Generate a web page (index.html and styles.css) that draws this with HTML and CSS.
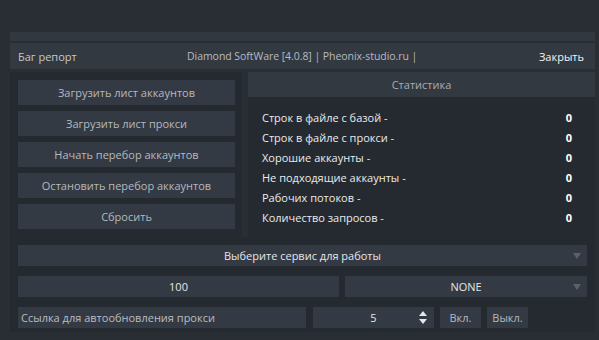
FILE: index.html
```html
<!DOCTYPE html>
<html lang="ru">
<head>
    <meta charset="UTF-8">
    <meta name="viewport" content="width=device-width, initial-scale=1.0">
    <link rel="stylesheet" href="styles.css">
</head>
<body>
    <div class="window">
        <div class="top-strip"></div>
        <div class="title-bar">
            <span class="bug">Баг репорт</span>
            <span class="caption">Diamond SoftWare [4.0.8] | Pheonix-studio.ru |</span>
            <span class="close">Закрыть</span>
        </div>
        <div class="main">
            <div class="actions">
                <div class="btn">Загрузить лист аккаунтов</div>
                <div class="btn">Загрузить лист прокси</div>
                <div class="btn">Начать перебор аккаунтов</div>
                <div class="btn">Остановить перебор аккаунтов</div>
                <div class="btn">Сбросить</div>
            </div>
            <div class="stats">
                <div class="stats-header">Статистика</div>
                <div class="stats-body">
                    <div class="stat-row"><span>Строк в файле с базой -</span><b>0</b></div>
                    <div class="stat-row"><span>Строк в файле с прокси -</span><b>0</b></div>
                    <div class="stat-row"><span>Хорошие аккаунты -</span><b>0</b></div>
                    <div class="stat-row"><span>Не подходящие аккаунты -</span><b>0</b></div>
                    <div class="stat-row"><span>Рабочих потоков -</span><b>0</b></div>
                    <div class="stat-row"><span>Количество запросов -</span><b>0</b></div>
                </div>
            </div>
        </div>
        <div class="settings">
            <div class="select full">Выберите сервис для работы<span class="arrow"></span></div>
            <div class="row">
                <div class="field threads">100</div>
                <div class="select proxy-type">NONE<span class="arrow"></span></div>
            </div>
            <div class="row">
                <div class="field link">Ссылка для автообновления прокси</div>
                <div class="field spin">5
                    <span class="spin-arrows">
                        <svg width="8" height="15" viewBox="0 0 8 15"><path d="M0 6 L4 1 L8 6 Z M0 9 L4 14 L8 9 Z" fill="#e4e6e8"/></svg>
                    </span>
                </div>
                <div class="small-btn">Вкл.</div>
                <div class="small-btn">Выкл.</div>
            </div>
        </div>
    </div>
</body>
</html>
```

FILE: styles.css
```css
body {
    margin: 0;
    padding: 0;
    background-color: #292e35;
    font-family: "Open Sans", "Noto Sans", sans-serif;
    font-size: 11px;
    color: #b9bdc2;
}
.window {
    width: 585px;
    margin-left: 10px;
    padding-top: 32px;
}
.top-strip {
    height: 9px;
    background-color: #323840;
    margin-bottom: 2px;
}
.title-bar {
    height: 26px;
    display: flex;
    align-items: center;
    background-color: #333941;
    padding: 0 11px 0 8px;
    margin-bottom: 3px;
}
.title-bar .bug {
    color: #c3c7cc;
    width: 169px;
}
.title-bar .caption {
    color: #b6bac0;
    font-size: 10.5px;
    letter-spacing: -0.05px;
    margin-right: auto;
}
.title-bar .close {
    color: #f4f4f4;
}
.main {
    display: flex;
    gap: 6px;
    height: 165px;
}
.actions {
    width: 217px;
    background-color: #252a31;
    padding: 8px 7px 8px 8px;
    display: flex;
    flex-direction: column;
    gap: 6px;
}
.btn {
    height: 25px;
    line-height: 25px;
    text-align: center;
    background-color: #343a43;
    color: #b5b9be;
}
.stats {
    flex: 1;
    background-color: #252a31;
}
.stats-header {
    height: 25px;
    line-height: 25px;
    text-align: center;
    background-color: #333941;
    color: #a9adb3;
}
.stats-body {
    padding: 11px 23px 0 14px;
}
.stat-row {
    display: flex;
    justify-content: space-between;
    height: 20px;
    line-height: 20px;
    color: #e9eaec;
}
.stat-row b {
    color: #ffffff;
}
.settings {
    background-color: #252a31;
    padding: 8px 8px 4px 8px;
    display: flex;
    flex-direction: column;
    gap: 10px;
}
.row {
    display: flex;
    gap: 6px;
}
.select,
.field,
.small-btn {
    height: 21px;
    line-height: 21px;
    background-color: #343a43;
    color: #e4e6e8;
    position: relative;
}
.select {
    text-align: center;
}
.arrow {
    position: absolute;
    right: 6px;
    top: 8px;
    border-left: 4px solid transparent;
    border-right: 4px solid transparent;
    border-top: 6px solid #5b6168;
}
.threads {
    width: 321px;
    text-align: center;
}
.proxy-type {
    flex: 1;
}
.link {
    width: 285px;
    padding-left: 3px;
    margin-right: 1px;
    color: #b9bdc2;
}
.spin {
    width: 121px;
    text-align: center;
}
.spin-arrows {
    position: absolute;
    right: 7px;
    top: 3px;
    height: 15px;
}
.small-btn {
    width: 41px;
    text-align: center;
    color: #b5b9be;
}
```
